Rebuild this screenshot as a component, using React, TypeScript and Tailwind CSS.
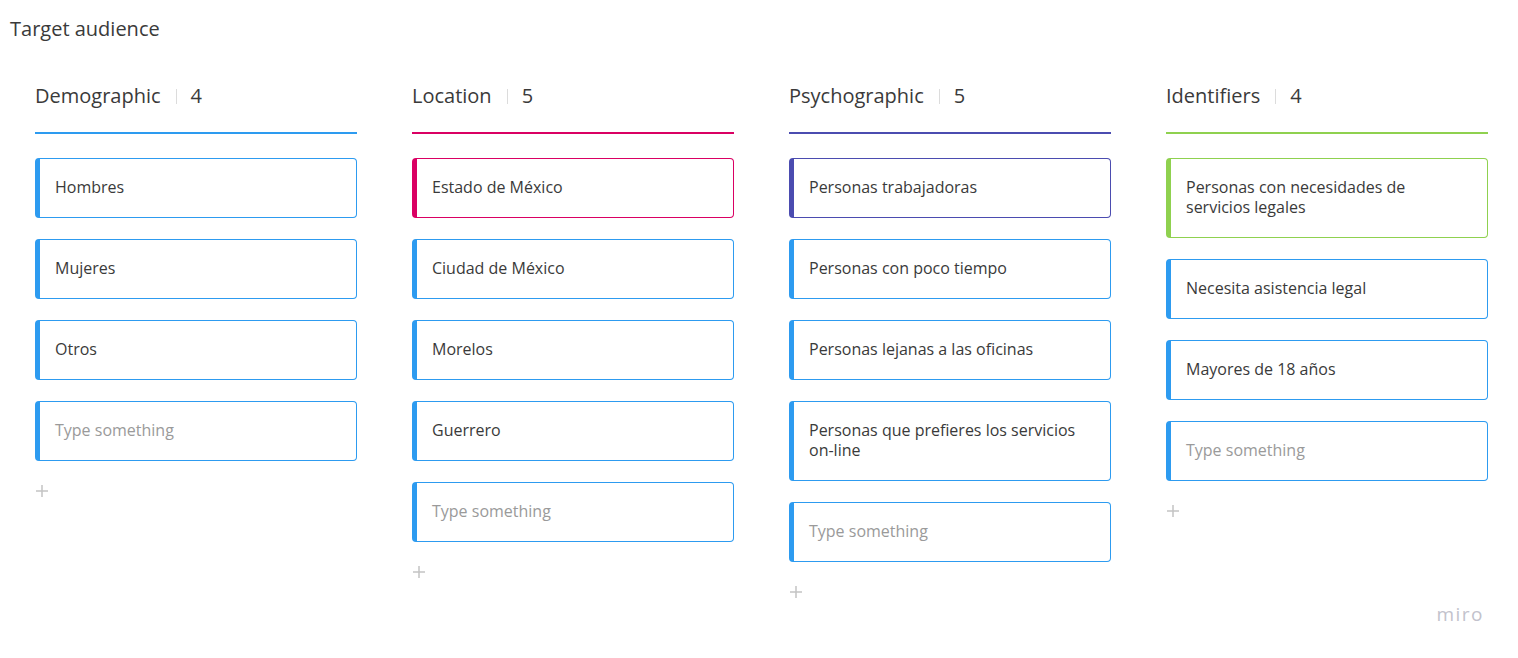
import React from 'react';

type Column = {
  title: string;
  accent: string;
  items: string[];
};

const BLUE = '#2d9bf0';

const columns: Column[] = [
  {
    title: 'Demographic',
    accent: BLUE,
    items: ['Hombres', 'Mujeres', 'Otros'],
  },
  {
    title: 'Location',
    accent: '#da0063',
    items: ['Estado de México', 'Ciudad de México', 'Morelos', 'Guerrero'],
  },
  {
    title: 'Psychographic',
    accent: '#4b4cb0',
    items: [
      'Personas trabajadoras',
      'Personas con poco tiempo',
      'Personas lejanas a las oficinas',
      'Personas que prefieres los servicios on-line',
    ],
  },
  {
    title: 'Identifiers',
    accent: '#8fd14f',
    items: ['Personas con necesidades de servicios legales', 'Necesita asistencia legal', 'Mayores de 18 años'],
  },
];

const Card: React.FC<{ text: string; color: string; placeholder?: boolean }> = ({ text, color, placeholder }) => (
  <div
    className="rounded-[4px] border border-l-[5px] bg-white pb-[20px] pt-[18px] pl-[15px] pr-4 text-[16px] leading-[20px]"
    style={{ borderColor: color }}
  >
    <span className={placeholder ? 'text-[#9a9a9a]' : 'text-[#3a3a3a]'}>{text}</span>
  </div>
);

const App: React.FC = () => {
  return (
    <div
      className="relative h-[658px] w-full overflow-hidden bg-white"
      style={{ fontFamily: '"Open Sans", "Noto Sans", sans-serif' }}
    >
      <div className="pl-[10px] pt-[16px] text-[20px] leading-[26px] text-[#3a3a3a]">Target audience</div>

      <div className="mt-[40px] flex gap-[55px] pl-[35px]">
        {columns.map((col) => (
          <div key={col.title} className="flex w-[322px] flex-col">
            {/* Header */}
            <div className="flex items-center text-[20px] leading-[28px] text-[#3a3a3a]">
              <span>{col.title}</span>
              <span className="ml-[15px] mr-[14px] h-[15px] w-px bg-[#dcdcdc]" />
              <span>{col.items.length + 1}</span>
            </div>
            <div className="mt-[22px] h-[2px] w-full" style={{ backgroundColor: col.accent }} />

            <div className="mt-[24px] flex flex-col gap-[21px]">
              {col.items.map((item, i) => (
                <Card key={item} text={item} color={i === 0 ? col.accent : BLUE} />
              ))}
              <Card text="Type something" color={BLUE} placeholder />
            </div>

            <div className="mt-[23px]">
              <svg width="14" height="14" viewBox="0 0 14 14">
                <path d="M7 1v12M1 7h12" stroke="#c4c4c4" strokeWidth="1.5" />
              </svg>
            </div>
          </div>
        ))}
      </div>

      <div className="absolute bottom-[34px] right-[34px] text-[19px] leading-none tracking-[1.5px] text-[#c2c2cc]">
        miro
      </div>
    </div>
  );
};

export default App;
